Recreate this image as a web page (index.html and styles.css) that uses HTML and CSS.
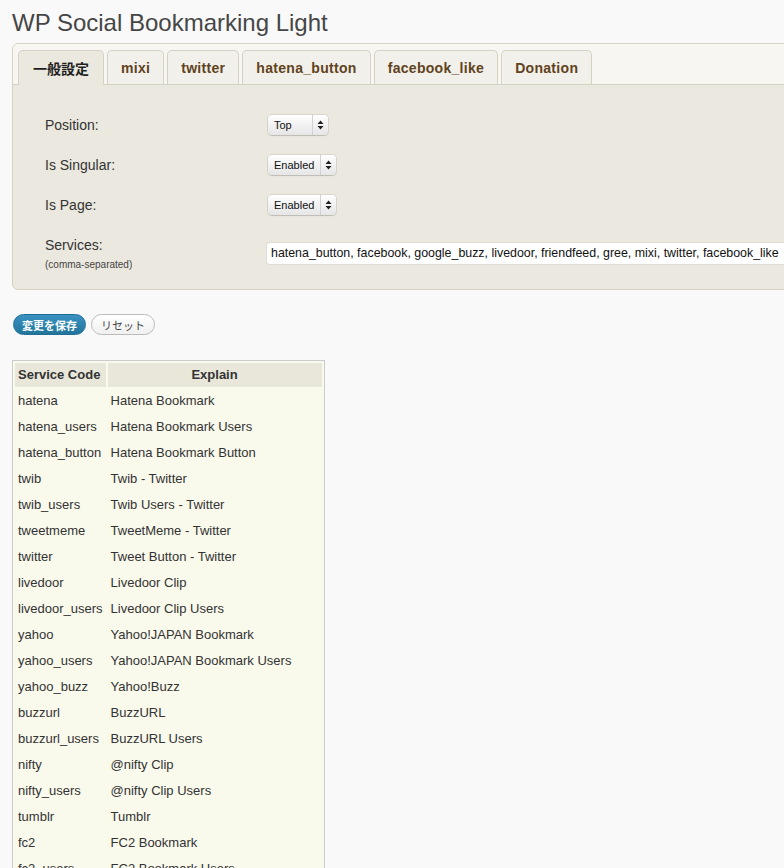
FILE: index.html
```html
<!DOCTYPE html>
<html lang="ja">
<head>
<meta charset="utf-8">
<title>WP Social Bookmarking Light</title>
<link rel="stylesheet" href="styles.css">
</head>
<body>
<div class="wrap">
  <h2 class="title">WP Social Bookmarking Light</h2>

  <div class="panel">
    <div class="tabbar">
      <div class="tab active">一般設定</div>
      <div class="tab">mixi</div>
      <div class="tab">twitter</div>
      <div class="tab">hatena_button</div>
      <div class="tab">facebook_like</div>
      <div class="tab">Donation</div>
    </div>
    <div class="panel-body">
      <div class="row">
        <div class="label">Position:</div>
        <div class="select">
          <span class="sel-text w-top">Top</span>
          <span class="sel-arrow"><svg width="7" height="10" viewBox="0 0 7 10"><path d="M3.5 0.5 L6.5 4 L0.5 4 Z M0.5 6 L6.5 6 L3.5 9.5 Z" fill="#222"/></svg></span>
        </div>
      </div>
      <div class="row">
        <div class="label">Is Singular:</div>
        <div class="select">
          <span class="sel-text w-en">Enabled</span>
          <span class="sel-arrow"><svg width="7" height="10" viewBox="0 0 7 10"><path d="M3.5 0.5 L6.5 4 L0.5 4 Z M0.5 6 L6.5 6 L3.5 9.5 Z" fill="#222"/></svg></span>
        </div>
      </div>
      <div class="row">
        <div class="label">Is Page:</div>
        <div class="select">
          <span class="sel-text w-en">Enabled</span>
          <span class="sel-arrow"><svg width="7" height="10" viewBox="0 0 7 10"><path d="M3.5 0.5 L6.5 4 L0.5 4 Z M0.5 6 L6.5 6 L3.5 9.5 Z" fill="#222"/></svg></span>
        </div>
      </div>
      <div class="row row-services">
        <div class="label label-services">Services:<span class="sub">(comma-separated)</span></div>
        <div class="textinput">hatena_button, facebook, google_buzz, livedoor, friendfeed, gree, mixi, twitter, facebook_like</div>
      </div>
    </div>
  </div>

  <div class="buttons">
    <span class="btn btn-primary">変更を保存</span>
    <span class="btn btn-secondary">リセット</span>
  </div>

  <table class="codes">
    <thead>
      <tr><th class="c1">Service Code</th><th class="c2">Explain</th></tr>
    </thead>
    <tbody>
      <tr><td>hatena</td><td>Hatena Bookmark</td></tr>
      <tr><td>hatena_users</td><td>Hatena Bookmark Users</td></tr>
      <tr><td>hatena_button</td><td>Hatena Bookmark Button</td></tr>
      <tr><td>twib</td><td>Twib - Twitter</td></tr>
      <tr><td>twib_users</td><td>Twib Users - Twitter</td></tr>
      <tr><td>tweetmeme</td><td>TweetMeme - Twitter</td></tr>
      <tr><td>twitter</td><td>Tweet Button - Twitter</td></tr>
      <tr><td>livedoor</td><td>Livedoor Clip</td></tr>
      <tr><td>livedoor_users</td><td>Livedoor Clip Users</td></tr>
      <tr><td>yahoo</td><td>Yahoo!JAPAN Bookmark</td></tr>
      <tr><td>yahoo_users</td><td>Yahoo!JAPAN Bookmark Users</td></tr>
      <tr><td>yahoo_buzz</td><td>Yahoo!Buzz</td></tr>
      <tr><td>buzzurl</td><td>BuzzURL</td></tr>
      <tr><td>buzzurl_users</td><td>BuzzURL Users</td></tr>
      <tr><td>nifty</td><td>@nifty Clip</td></tr>
      <tr><td>nifty_users</td><td>@nifty Clip Users</td></tr>
      <tr><td>tumblr</td><td>Tumblr</td></tr>
      <tr><td>fc2</td><td>FC2 Bookmark</td></tr>
      <tr><td>fc2_users</td><td>FC2 Bookmark Users</td></tr>
      <tr><td>newsing</td><td>newsing</td></tr>
      <tr><td>choix</td><td>Choix</td></tr>
      <tr><td>google</td><td>Google Bookmarks</td></tr>
    </tbody>
  </table>
</div>
</body>
</html>
```

FILE: styles.css
```css
html, body {
  margin: 0;
  padding: 0;
  overflow: hidden;
}
body {
  background: #f9f9f9;
  font-family: "Liberation Sans", Arial, "Noto Sans CJK JP", sans-serif;
  color: #333;
}
.wrap {
  padding-left: 12px;
}
.title {
  margin: 8px 0 6px 0;
  font-size: 24px;
  line-height: 29px;
  font-weight: normal;
  color: #464646;
}
.panel {
  width: 880px;
  border: 1px solid #d6d2c2;
  border-radius: 6px;
  background: #ebe8df;
}
.tabbar {
  display: flex;
  align-items: flex-start;
  padding: 6px 0 0 5px;
  background: #f7f6f3;
  border-bottom: 1px solid #d6d2c2;
  border-radius: 5px 5px 0 0;
  height: 34px;
}
.tab {
  display: flex;
  align-items: center;
  padding: 1px 13px 0 13px;
  box-sizing: border-box;
  height: 34px;
  margin-right: 3px;
  border: 1px solid #d6d2c2;
  border-bottom: none;
  border-radius: 5px 5px 0 0;
  background: #f2f0ea;
  font-size: 14px;
  font-weight: bold;
  letter-spacing: 0.3px;
  color: #5f4321;
  white-space: nowrap;
}
.tab.active {
  height: 35px;
  padding: 0 14px;
  margin-bottom: -1px;
  letter-spacing: 0;
  background: #ebe8df;
  color: #1e1e1e;
  font-family: "Liberation Sans", "Noto Sans CJK JP", sans-serif;
}
.panel-body {
  padding: 20px 0 25px 32px;
}
.row {
  display: flex;
  align-items: center;
  height: 40px;
}
.label {
  width: 223px;
  flex: none;
  font-size: 14px;
  line-height: 17px;
  color: #333;
}
.row-services {
  height: 39px;
  align-items: flex-start;
}
.label-services {
  margin-top: 12px;
}
.sub {
  display: block;
  font-size: 10px;
  line-height: 12px;
  margin-top: 5px;
  color: #444;
}
.select {
  display: inline-flex;
  align-items: center;
  height: 20px;
  border-radius: 4px;
  background: linear-gradient(#ffffff, #f3f3f3 45%, #e6e6e6);
  box-shadow: 0 0 0 1px rgba(0,0,0,0.08), 0 1px 1px rgba(0,0,0,0.12);
  font-size: 11px;
  color: #111;
}
.sel-text {
  padding-left: 6px;
  height: 20px;
  line-height: 20px;
  border-right: 1px solid #d2d2d2;
  box-sizing: border-box;
}
.w-top { width: 45px; }
.w-en { width: 53px; }
.sel-arrow {
  width: 15px;
  height: 20px;
  display: flex;
  align-items: center;
  justify-content: center;
}
.sel-arrow svg {
  display: block;
}
.textinput {
  margin-top: 18px;
  margin-left: -1px;
  width: 600px;
  height: 21px;
  line-height: 21px;
  padding-left: 4px;
  background: #fff;
  border-radius: 3px;
  box-shadow: 0 0 0 1px rgba(0,0,0,0.05);
  font-size: 12.4px;
  color: #111;
  white-space: nowrap;
}
.buttons {
  display: flex;
  gap: 5px;
  margin: 24px 0 25px 1px;
}
.btn {
  display: inline-flex;
  align-items: center;
  height: 19px;
  padding: 0 8px;
  border-radius: 11px;
  font-size: 11px;
  font-family: "Liberation Sans", "Noto Sans CJK JP", sans-serif;
}
.btn-primary {
  background: linear-gradient(#3a92c2, #21759b);
  border: 1px solid #1f6f95;
  color: #fff;
  font-weight: bold;
}
.btn-secondary {
  background: linear-gradient(#ffffff, #f0f0f0);
  border: 1px solid #bbb;
  color: #464646;
  padding: 0 9px;
}
.codes {
  border: 1px solid #cccccc;
  border-spacing: 2px;
  background: #f9f9ec;
  font-size: 13px;
  color: #333;
}
.codes th, .codes td {
  padding: 3px;
  line-height: 18px;
  text-align: left;
  white-space: nowrap;
}
.codes th {
  background: #e8e7da;
  font-weight: bold;
  color: #333;
}
.codes th.c1 { width: 84px; }
.codes th.c2 { width: 208px; text-align: center; }
```
